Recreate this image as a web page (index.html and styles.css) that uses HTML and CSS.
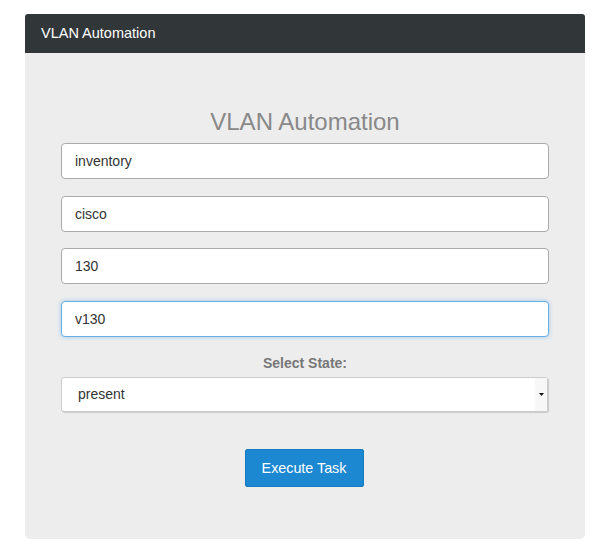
FILE: index.html
```html
<!DOCTYPE html>
<html>
<head>
<meta charset="utf-8">
<link rel="stylesheet" href="styles.css">
</head>
<body>
<div class="app">
  <div class="topbar">VLAN Automation</div>
  <div class="panel">
    <h1 class="title">VLAN Automation</h1>
    <div class="field">inventory</div>
    <div class="field">cisco</div>
    <div class="field">130</div>
    <div class="field focused">v130</div>
    <div class="label">Select State:</div>
    <div class="select">
      <span class="select-value">present</span>
      <span class="select-arrow"><svg width="5" height="3" viewBox="0 0 5 3"><path d="M0 0H5L2.5 3Z" fill="#111"/></svg></span>
    </div>
    <div class="actions"><button class="btn">Execute Task</button></div>
  </div>
</div>
</body>
</html>
```
FILE: styles.css
```css
html, body { margin: 0; padding: 0; background: #fff; }
body { font-family: "Liberation Sans", Arial, sans-serif; }
.app { margin: 14px 0 0 25px; width: 560px; }
.topbar {
  height: 39px;
  background: #313639;
  color: #fff;
  font-size: 14.5px;
  line-height: 38px;
  padding-left: 16px;
  border-radius: 3px 3px 0 0;
}
.panel {
  background: #ededed;
  height: 486px;
  box-sizing: border-box;
  padding: 52px 36px 0 36px;
  border-radius: 0 0 5px 5px;
}
.title {
  margin: 0 0 4px 0;
  text-align: center;
  font-weight: normal;
  font-size: 24px;
  line-height: 34px;
  color: #888;
}
.field {
  height: 36px;
  box-sizing: border-box;
  border: 1px solid #aaa;
  border-radius: 4px;
  background: #fff;
  font-size: 14px;
  color: #333;
  line-height: 34px;
  padding-left: 13px;
  margin-bottom: 16.67px;
}
.field.focused {
  border-color: #66afe9;
  box-shadow: 0 0 4px rgba(102, 175, 233, 0.6);
}
.label {
  text-align: center;
  font-weight: bold;
  font-size: 14px;
  color: #777;
  line-height: 18px;
  margin-top: 0;
  margin-bottom: 5px;
}
.select {
  height: 35px;
  margin-right: 1px;
  box-sizing: border-box;
  border: 1px solid #ccc;
  border-radius: 3px;
  background: #fff;
  display: flex;
  align-items: stretch;
  box-shadow: 1px 1px 1px rgba(0,0,0,0.15);
}
.select-value {
  flex: 1;
  font-size: 14px;
  color: #333;
  line-height: 33px;
  padding-left: 16px;
}
.select-arrow {
  width: 12px;
  background: #f7f7f7;
  display: flex;
  align-items: center;
  justify-content: center;
}
.actions { display: flex; justify-content: center; margin-top: 37px; padding-right: 2px; }
.btn {
  width: 119px;
  height: 38px;
  border: 1px solid #1779bf;
  border-radius: 2px;
  background: #1b88d1;
  color: #fff;
  font-family: "Liberation Sans", Arial, sans-serif;
  font-size: 14.3px;
  padding: 0;
}
```
